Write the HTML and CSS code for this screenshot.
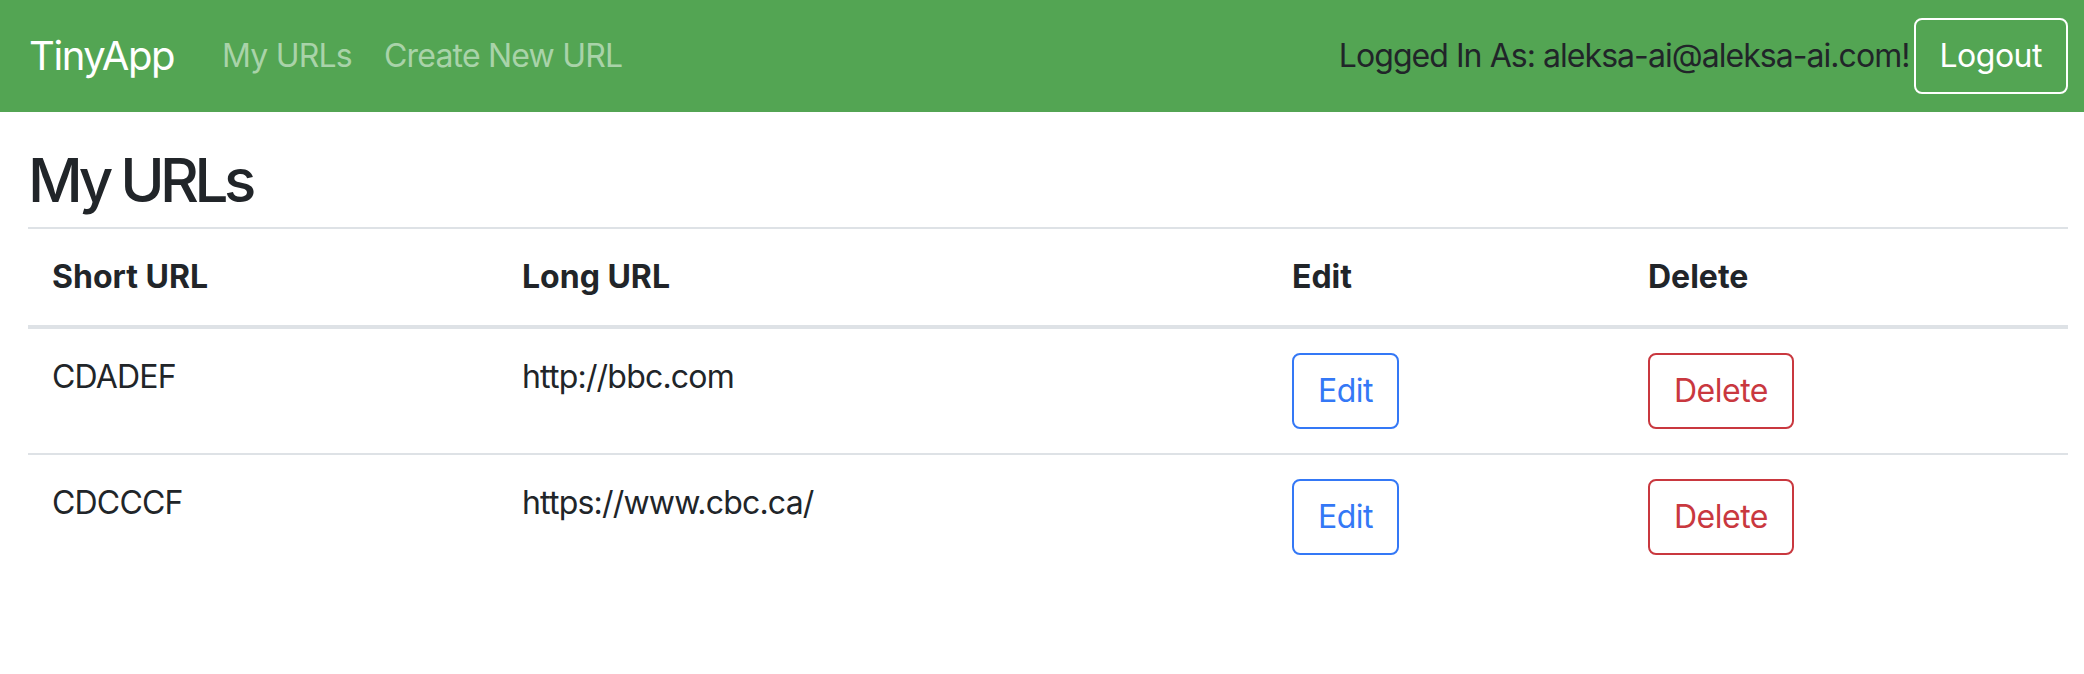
FILE: index.html
```html
<!DOCTYPE html>
<html lang="en">
<head>
<meta charset="utf-8">
<title>TinyApp</title>
<link rel="stylesheet" href="styles.css">
</head>
<body>
<nav class="navbar">
  <a class="brand" href="#">TinyApp</a>
  <div class="nav-links">
    <a class="nav-link" href="#">My URLs</a>
    <a class="nav-link" href="#">Create New URL</a>
  </div>
  <div class="nav-right">
    <span class="user-text">Logged In As: aleksa-ai@aleksa-ai.com!</span>
    <button class="btn btn-light-outline">Logout</button>
  </div>
</nav>
<main class="container">
  <h1 class="title">My URLs</h1>
  <table class="urls">
    <colgroup>
      <col class="c1"><col class="c2"><col class="c3"><col class="c4">
    </colgroup>
    <thead>
      <tr><th>Short URL</th><th>Long URL</th><th>Edit</th><th>Delete</th></tr>
    </thead>
    <tbody>
      <tr>
        <td>CDADEF</td><td>http://bbc.com</td>
        <td><button class="btn btn-edit">Edit</button></td>
        <td><button class="btn btn-delete">Delete</button></td>
      </tr>
      <tr>
        <td>CDCCCF</td><td>https://www.cbc.ca/</td>
        <td><button class="btn btn-edit">Edit</button></td>
        <td><button class="btn btn-delete">Delete</button></td>
      </tr>
    </tbody>
  </table>
</main>
</body>
</html>
```

FILE: styles.css
```css
* { box-sizing: border-box; }

body {
  margin: 0;
  font-family: Inter, "Liberation Sans", sans-serif;
  font-size: 32px;
  line-height: 1.5;
  letter-spacing: -0.8px;
  color: #212529;
  background: #fff;
}

.navbar {
  display: flex;
  align-items: center;
  height: 112px;
  padding: 0 16px 0 29px;
  background: #53a553;
}

.brand {
  font-size: 40px;
  letter-spacing: -1.4px;
  color: #fff;
  text-decoration: none;
  margin-right: 32px;
  line-height: 1.5;
}

.nav-links {
  display: flex;
}

.nav-link {
  color: #a9d3a9;
  text-decoration: none;
  padding: 0 16px;
}

.nav-right {
  margin-left: auto;
  display: flex;
  align-items: center;
}

.user-text {
  color: #212529;
  letter-spacing: -0.95px;
  margin-right: 4px;
}

.btn {
  font-family: inherit;
  font-size: 32px;
  letter-spacing: -0.5px;
  line-height: 48px;
  padding: 12px 24px;
  border-radius: 8px;
  background: transparent;
  border: 2px solid;
  cursor: pointer;
}

.btn-light-outline {
  color: #fff;
  border-color: #fff;
}

.btn-edit {
  color: #3478f6;
  border-color: #3478f6;
}

.btn-delete {
  color: #c9383f;
  border-color: #c9383f;
}

.container {
  padding: 0 16px 0 28px;
}

.title {
  font-size: 60px;
  font-weight: 500;
  letter-spacing: -4.5px;
  line-height: 1.2;
  margin: 32px 0 11px;
}

.urls {
  width: 100%;
  border-collapse: collapse;
  table-layout: fixed;
}

.c1 { width: 470px; }
.c2 { width: 770px; }
.c3 { width: 356px; }
.c4 { width: 444px; }

.urls th, .urls td {
  text-align: left;
  vertical-align: top;
  padding: 24px;
  border-top: 2px solid #dee2e6;
}

.urls th {
  font-weight: 700;
  letter-spacing: 0;
  border-bottom: 4px solid #dee2e6;
}
```
